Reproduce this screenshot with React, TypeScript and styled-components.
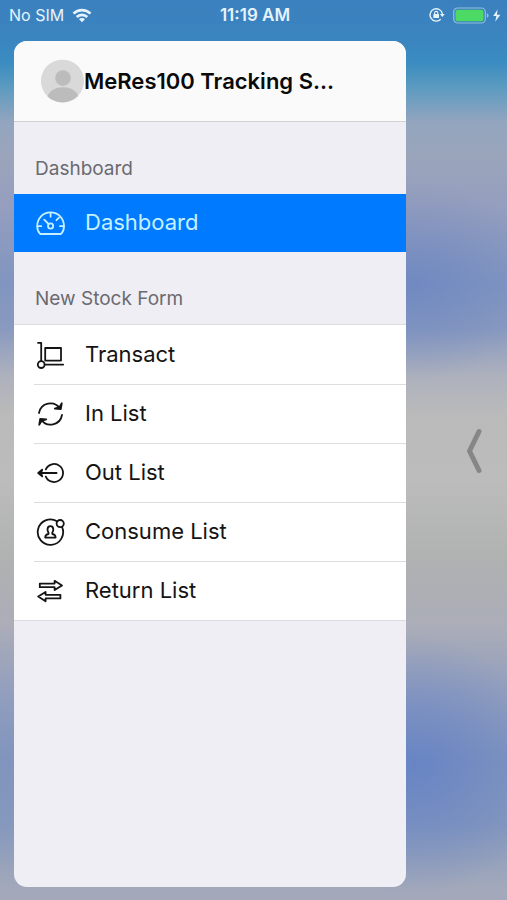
import React from "react";
import styled, { createGlobalStyle, css } from "styled-components";

const GlobalStyle = createGlobalStyle`
  *, *::before, *::after { box-sizing: border-box; }
  body { margin: 0; font-family: Inter, "Liberation Sans", sans-serif; }
`;

const Screen = styled.div`
  min-height: 100vh;
  display: flex;
  flex-direction: column;
  background:
    radial-gradient(ellipse 120px 100px at calc(100% - 92px) 282px, rgba(96, 126, 194, 0.5), transparent),
    radial-gradient(ellipse 130px 130px at calc(100% - 92px) 765px, rgba(88, 122, 200, 0.6), transparent),
    linear-gradient(
      #3b80be 0,
      #3a85c0 40px,
      #3a8cc1 62px,
      #5d9bc0 88px,
      #93a5bf 122px,
      #9aa5bb 155px,
      #959ebe 205px,
      #8095c0 285px,
      #8a9abf 330px,
      #adb1bd 375px,
      #bababa 415px,
      #bcbcbc 480px,
      #b0b1b1 560px,
      #abadb8 625px,
      #939fbd 690px,
      #8094be 760px,
      #8598bd 825px,
      #a3a9ba 890px
    );
`;

const StatusBar = styled.header`
  display: grid;
  grid-template-columns: 1fr auto 1fr;
  align-items: center;
  height: 30px;
  padding: 0 6px 0 9px;
  color: #e6f3fb;
  font-size: 16px;
  line-height: 20px;
`;

const StatusGroup = styled.div<{ $end?: boolean }>`
  display: flex;
  align-items: center;
  gap: 8px;
  justify-content: ${(p) => (p.$end ? "flex-end" : "flex-start")};
`;

const Clock = styled.time`
  font-size: 17px;
  font-weight: 600;
`;

const Body = styled.div`
  flex: 1;
  display: grid;
  grid-template-columns: minmax(0, 1fr) 101px;
  padding: 11px 0 13px 14px;
`;

const Panel = styled.aside`
  display: flex;
  flex-direction: column;
  overflow: hidden;
  border-radius: 13px;
  background: #efeef4;
`;

const Profile = styled.div`
  display: flex;
  align-items: center;
  height: 81px;
  padding: 0 27px;
  background: #fafafa;
  border-bottom: 1px solid #d0d0d3;
`;

const Title = styled.h1`
  margin: 0;
  font-size: 22px;
  line-height: 28px;
  font-weight: 600;
  color: #0a0a0a;
  white-space: nowrap;
`;

const SectionTitle = styled.h2`
  margin: 0;
  height: 72px;
  padding: 34px 21px 0;
  font-size: 19px;
  line-height: 26px;
  font-weight: 400;
  color: #6b6a70;
`;

const List = styled.ul<{ $framed?: boolean }>`
  margin: 0;
  padding: 0;
  list-style: none;
  background: #fff;
  ${(p) =>
    p.$framed &&
    css`
      border-top: 1px solid #dcdbe0;
      border-bottom: 1px solid #dcdbe0;
    `}
`;

const Item = styled.li`
  & + & > a::before {
    content: "";
    position: absolute;
    inset: 0 0 auto 20px;
    height: 1px;
    background: #dddde0;
  }
`;

const ItemLink = styled.a<{ $active?: boolean }>`
  position: relative;
  display: flex;
  align-items: center;
  gap: 20px;
  height: ${(p) => (p.$active ? 58 : 59)}px;
  padding: 0 21px;
  font-size: 22px;
  line-height: 28px;
  text-decoration: none;
  color: ${(p) => (p.$active ? "#c4f1ff" : "#141414")};
  background: ${(p) => (p.$active ? "#007aff" : "transparent")};
`;

const Label = styled.span`
  padding-bottom: 2px;
`;

const Icon = styled.svg`
  flex: none;
  width: 30px;
  height: 30px;
  fill: none;
  stroke: currentColor;
  stroke-width: 1.8;
  stroke-linecap: round;
  stroke-linejoin: round;
`;

const CloseButton = styled.button`
  align-self: center;
  justify-self: end;
  display: flex;
  margin: 0 24px 26px 0;
  padding: 0;
  border: 0;
  background: none;
  color: #868686;
  cursor: pointer;
`;

const WifiIcon = () => (
  <svg width="20" height="15" viewBox="0 0 20 15" fill="none" stroke="currentColor" strokeWidth="2.6" aria-hidden="true">
    <path d="M1.5 5.6a12.2 12.2 0 0 1 17 0" />
    <path d="M4.7 9a7.6 7.6 0 0 1 10.6 0" />
    <path d="M10 14.2 7 11.2a4.2 4.2 0 0 1 6 0Z" fill="currentColor" stroke="none" />
  </svg>
);

const LockIcon = () => (
  <svg width="16" height="16" viewBox="0 0 16 16" fill="none" stroke="currentColor" aria-hidden="true">
    <path d="M11.700 12.300A6.200 6.200 0 1 1 13.400 6.800" strokeWidth="1.4" />
    <path d="M10.900 7h4.800l-2.300 3Z" fill="currentColor" stroke="none" />
    <rect x="4.400" y="7" width="5.600" height="4" rx="0.600" fill="currentColor" stroke="none" />
    <path d="M5.600 7.200V6a1.600 1.600 0 0 1 3.200 0v1.200" strokeWidth="1.1" />
  </svg>
);

const BatteryIcon = () => (
  <svg width="48" height="17" viewBox="0 0 48 17" aria-hidden="true">
    <rect x="0.7" y="1" width="31.6" height="15" rx="4" fill="none" stroke="#8fc0de" strokeWidth="1.2" />
    <rect x="2.5" y="2.8" width="28" height="11.4" rx="2.2" fill="#4cd964" />
    <path d="M33.8 6.2v4.6c1.2-.4 1.8-1.2 1.8-2.3s-.6-1.9-1.8-2.3Z" fill="#8fc0de" />
    <path d="M44.6 2.4 40.2 9h3.2l-1.2 5.8L47.4 7.8h-3.5Z" fill="currentColor" />
  </svg>
);

const Avatar = () => (
  <svg width="43" height="44" viewBox="0 0 44 44" aria-hidden="true">
    <defs>
      <clipPath id="avatar-disc">
        <circle cx="22" cy="22" r="22" />
      </clipPath>
    </defs>
    <g clipPath="url(#avatar-disc)">
      <rect width="44" height="44" fill="#d9d9d9" />
      <circle cx="22.5" cy="19" r="8" fill="#bcbcbc" />
      <ellipse cx="22.5" cy="40" rx="16" ry="11.6" fill="#bcbcbc" />
    </g>
  </svg>
);

const icons = {
  gauge: (
    <>
      <path d="M5.200 26C3.200 23.900 2.200 21.400 2.200 18.200 2.200 10.200 8 4.400 15.600 4.400S29 10.200 29 18.200c0 3.200-1 5.700-3 7.800Z" />
      <circle cx="15.600" cy="18" r="2.600" />
      <path d="M13.600 16 9.200 11.600M15.600 4.800v4M2.600 18.200h3.600M25 18.200h3.600M24 9.600l-2.600 2.600" />
    </>
  ),
  trolley: (
    <>
      <path d="M3 2.800h3.200v18.200" />
      <rect x="10.200" y="8" width="15.800" height="12.600" />
      <circle cx="6.200" cy="24.600" r="3.400" />
      <path d="M9.800 24.600H28.200" />
    </>
  ),
  refresh: (
    <>
      <path d="M4 14A11.600 11.600 0 0 1 25 9.400M27 16A11.600 11.600 0 0 1 6 20.600" />
      <path d="M26.800 4.200 25.800 10 19.800 9.600 24.400 8.200Z" fill="currentColor" />
      <path d="M4.200 25.800 5.200 20l6 .4L6.600 21.800Z" fill="currentColor" />
    </>
  ),
  exit: (
    <>
      <path d="M10.800 11.400a9 9 0 1 1 0 7.200" />
      <path d="M4 15h17.600" />
      <path d="M7.200 11.600 3.200 15l4 3.400L6 15Z" fill="currentColor" />
    </>
  ),
  consumer: (
    <>
      <path d="M27.200 10.400A12.700 12.700 0 1 1 22 4.300" />
      <circle cx="25.200" cy="6.600" r="3.600" />
      <path d="M10.200 20.600c0-2.300 1.100-3.300 3.300-3.600v-1.500c-.7-.8-1-1.700-1-2.900 0-2.100 1.100-3.400 2.900-3.400s2.900 1.300 2.900 3.400c0 1.200-.3 2.100-1 2.900V17c2.200.3 3.300 1.300 3.300 3.600Z" />
    </>
  ),
  swap: (
    <>
      <path d="M4.800 7.600h14.800V4.800l7.400 4.600-7.400 4.600v-2.800H4.800Z" />
      <path d="M25.400 18.800H10.600v-2.800L3.200 20.600l7.400 4.600v-2.800h14.800Z" />
    </>
  ),
};

type Entry = { label: string; icon: keyof typeof icons; active?: boolean };

const sections: { title: string; framed?: boolean; entries: Entry[] }[] = [
  { title: "Dashboard", entries: [{ label: "Dashboard", icon: "gauge", active: true }] },
  {
    title: "New Stock Form",
    framed: true,
    entries: [
      { label: "Transact", icon: "trolley" },
      { label: "In List", icon: "refresh" },
      { label: "Out List", icon: "exit" },
      { label: "Consume List", icon: "consumer" },
      { label: "Return List", icon: "swap" },
    ],
  },
];

export default function App() {
  return (
    <Screen>
      <GlobalStyle />
      <StatusBar>
        <StatusGroup>
          <span>No SIM</span>
          <WifiIcon />
        </StatusGroup>
        <Clock>11:19 AM</Clock>
        <StatusGroup $end>
          <LockIcon />
          <BatteryIcon />
        </StatusGroup>
      </StatusBar>
      <Body>
        <Panel>
          <Profile>
            <Avatar />
            <Title>MeRes100 Tracking S...</Title>
          </Profile>
          <nav aria-label="Main menu">
            {sections.map((section) => (
              <section key={section.title}>
                <SectionTitle>{section.title}</SectionTitle>
                <List $framed={section.framed}>
                  {section.entries.map((entry) => (
                    <Item key={entry.label}>
                      <ItemLink href="#" $active={entry.active} aria-current={entry.active ? "page" : undefined}>
                        <Icon viewBox="0 0 30 30" aria-hidden="true">
                          {icons[entry.icon]}
                        </Icon>
                        <Label>{entry.label}</Label>
                      </ItemLink>
                    </Item>
                  ))}
                </List>
              </section>
            ))}
          </nav>
        </Panel>
        <CloseButton type="button" aria-label="Close menu">
          <svg width="18" height="46" viewBox="0 0 18 46" fill="none" stroke="currentColor" strokeWidth="5" strokeLinecap="round" strokeLinejoin="round" aria-hidden="true">
            <path d="M14 3.500 4.500 23 14 42.500" />
          </svg>
        </CloseButton>
      </Body>
    </Screen>
  );
}
